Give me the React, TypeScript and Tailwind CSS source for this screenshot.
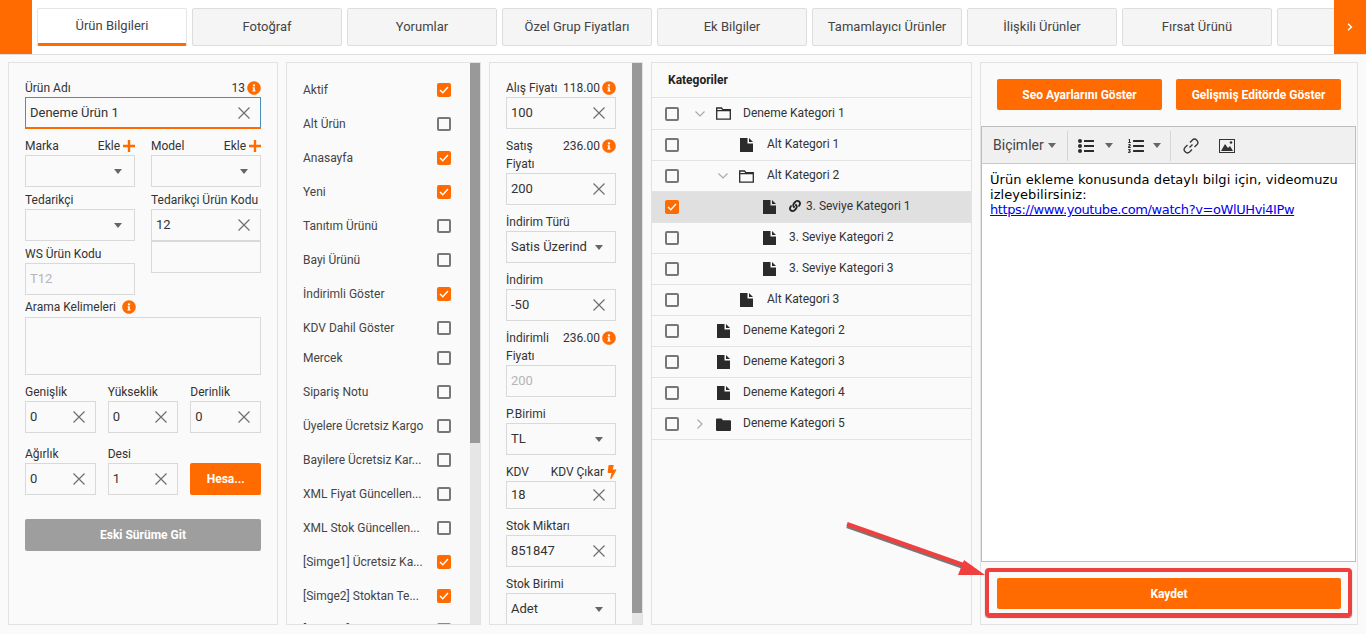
import type React from "react"
import { FaBolt, FaInfoCircle, FaLink, FaListOl } from "react-icons/fa"

const tabs = [
  "Ürün Bilgileri",
  "Fotoğraf",
  "Yorumlar",
  "Özel Grup Fiyatları",
  "Ek Bilgiler",
  "Tamamlayıcı Ürünler",
  "İlişkili Ürünler",
  "Fırsat Ürünü",
  "",
]

const flags = [
  { label: "Aktif", on: true },
  { label: "Alt Ürün", on: false },
  { label: "Anasayfa", on: true },
  { label: "Yeni", on: true },
  { label: "Tanıtım Ürünü", on: false },
  { label: "Bayi Ürünü", on: false },
  { label: "İndirimli Göster", on: true },
  { label: "KDV Dahil Göster", on: false },
  { label: "Mercek", on: false, tight: true },
  { label: "Sipariş Notu", on: false },
  { label: "Üyelere Ücretsiz Kargo", on: false },
  { label: "Bayilere Ücretsiz Kar...", on: false },
  { label: "XML Fiyat Güncellen...", on: false },
  { label: "XML Stok Güncellen...", on: false },
  { label: "[Simge1] Ücretsiz Ka...", on: true },
  { label: "[Simge2] Stoktan Te...", on: true },
  { label: "[Simge3]", on: true },
]

type Node = { label: string; level: number; kind: "open" | "closed" | "file"; checked?: boolean; link?: boolean }

const tree: Node[] = [
  { label: "Deneme Kategori 1", level: 0, kind: "open" },
  { label: "Alt Kategori 1", level: 1, kind: "file" },
  { label: "Alt Kategori 2", level: 1, kind: "open" },
  { label: "3. Seviye Kategori 1", level: 2, kind: "file", checked: true, link: true },
  { label: "3. Seviye Kategori 2", level: 2, kind: "file" },
  { label: "3. Seviye Kategori 3", level: 2, kind: "file" },
  { label: "Alt Kategori 3", level: 1, kind: "file" },
  { label: "Deneme Kategori 2", level: 0, kind: "file" },
  { label: "Deneme Kategori 3", level: 0, kind: "file" },
  { label: "Deneme Kategori 4", level: 0, kind: "file" },
  { label: "Deneme Kategori 5", level: 0, kind: "closed" },
]

const Clear = () => (
  <svg width="12" height="12" viewBox="0 0 12 12" className="shrink-0 text-[#6f6f6f]">
    <path d="M0.5 0.5 L11.5 11.5 M11.5 0.5 L0.5 11.5" stroke="currentColor" strokeWidth="1.2" fill="none" />
  </svg>
)

const Caret = () => <span className="h-0 w-0 shrink-0 border-x-[4px] border-t-[5px] border-x-transparent border-t-[#666]" />

const Info = () => <FaInfoCircle className="shrink-0 text-[14px] text-[#ff6b00]" />

const Plus = () => (
  <svg width="12" height="12" viewBox="0 0 12 12" className="ml-[1px] shrink-0 text-[#ff6b00]">
    <path d="M6 0 V12 M0 6 H12" stroke="currentColor" strokeWidth="2.4" fill="none" />
  </svg>
)

const Input: React.FC<{ value?: string; height?: string; focus?: boolean; disabled?: boolean; select?: boolean; clear?: boolean }> = ({
  value = "",
  height = "h-[32px]",
  focus,
  disabled,
  select,
  clear,
}) => (
  <div
    className={`flex ${height} w-full shrink-0 items-center justify-between overflow-hidden border pl-[4px] text-[13px] ${
      focus ? "border-[#4a90b8] border-b-2 border-b-[#ff6b00] pr-[10px]" : "border-[#d9d9d9] pr-[10px]"
    } ${disabled ? "text-[#b5b5b5]" : "text-[#333]"}`}
  >
    <span className="whitespace-nowrap">{value}</span>
    {clear && <Clear />}
    {select && (
      <span className="ml-[8px] mr-[2px] flex shrink-0">
        <Caret />
      </span>
    )}
  </div>
)

const Label: React.FC<{ text: string; children?: React.ReactNode }> = ({ text, children }) => (
  <div className="flex h-[20px] items-center justify-between whitespace-nowrap pt-[2px] text-[12px] text-[#333]">
    <span>{text}</span>
    {children && <span className="flex items-center gap-[2px]">{children}</span>}
  </div>
)

const TwoLine: React.FC<{ first: string; second: string; value: string }> = ({ first, second, value }) => (
  <div className="flex h-[38px] justify-between text-[12px] leading-[18px] text-[#333]">
    <div className="pt-[2px]">
      {first}
      <br />
      {second}
    </div>
    <span className="flex h-[20px] items-center gap-[2px] pt-[1px]">
      {value}
      <Info />
    </span>
  </div>
)

const Check: React.FC<{ on?: boolean }> = ({ on }) =>
  on ? (
    <span className="flex h-[14px] w-[14px] shrink-0 items-center justify-center rounded-[2px] bg-[#ff6b00]">
      <svg width="10" height="8" viewBox="0 0 10 8">
        <path d="M1 4 L3.8 6.8 L9 1" stroke="#fff" strokeWidth="1.4" fill="none" />
      </svg>
    </span>
  ) : (
    <span className="h-[14px] w-[14px] shrink-0 rounded-[2px] border-2 border-[#777]" />
  )

const Scrollbar: React.FC<{ thumb: string }> = ({ thumb }) => (
  <div className="h-full w-[10px] shrink-0 bg-[#e6e6e6]">
    <div className={`${thumb} w-full bg-[#999]`} />
  </div>
)

const FolderOpen = () => (
  <svg width="15" height="13" viewBox="0 0 15 13" className="text-[#2b2b2b]">
    <path d="M0.7 1 H5.5 L6.8 2.7 H14.3 V12.2 H0.7 Z M0.7 3.6 H14.3" stroke="currentColor" strokeWidth="1.3" fill="none" />
  </svg>
)

const FolderClosed = () => (
  <svg width="15" height="13" viewBox="0 0 15 13" className="text-[#2b2b2b]">
    <path d="M0 1.5 Q0 0.5 1 0.5 H5.5 L7 2.2 H14 Q15 2.2 15 3.2 V12 Q15 13 14 13 H1 Q0 13 0 12 Z" fill="currentColor" />
  </svg>
)

const FileIcon = () => (
  <svg width="13" height="14" viewBox="0 0 13 14" className="text-[#2b2b2b]">
    <path d="M0 0 H7.5 V5.5 H13 V14 H0 Z M9 0 L13 4 H9 Z" fill="currentColor" />
  </svg>
)

const ListDots = () => (
  <svg width="16" height="14" viewBox="0 0 16 14" className="shrink-0 text-[#2b2b2b]">
    <circle cx="2" cy="2" r="2" fill="currentColor" />
    <circle cx="2" cy="7" r="2" fill="currentColor" />
    <circle cx="2" cy="12" r="2" fill="currentColor" />
    <path d="M6 2 H16 M6 7 H16 M6 12 H16" stroke="currentColor" strokeWidth="2" fill="none" />
  </svg>
)

const TreeRow: React.FC<{ node: Node; first: boolean }> = ({ node, first }) => (
  <div
    className={`flex ${first ? "h-[32px]" : "h-[31px]"} items-center border-b border-[#e3e3e3] pl-[13px] text-[12px] text-[#333] ${
      node.checked ? "bg-[#e0e0e0]" : ""
    }`}
  >
    <Check on={node.checked} />
    <div className="flex items-center pl-[16px]" style={{ marginLeft: node.level * 23 }}>
      <span className="flex w-[21px] shrink-0 items-center">
        {node.kind === "open" && (
          <svg width="10" height="6" viewBox="0 0 10 6" className="text-[#aaa]">
            <path d="M0.5 0.5 L5 5 L9.5 0.5" stroke="currentColor" strokeWidth="1.2" fill="none" />
          </svg>
        )}
        {node.kind === "closed" && (
          <svg width="6" height="10" viewBox="0 0 6 10" className="ml-[2px] text-[#aaa]">
            <path d="M0.5 0.5 L5 5 L0.5 9.5" stroke="currentColor" strokeWidth="1.2" fill="none" />
          </svg>
        )}
      </span>
      <span className="flex w-[15px] shrink-0 justify-center">
        {node.kind === "open" && <FolderOpen />}
        {node.kind === "closed" && <FolderClosed />}
        {node.kind === "file" && <FileIcon />}
      </span>
      <span
        className={`${node.level === 1 ? "ml-[13px]" : "ml-[12px]"} flex items-center gap-[5px] whitespace-nowrap ${first ? "pb-[1px]" : "pb-[3px]"}`}
      >
        {node.link && <FaLink className="text-[12px] text-[#222]" />}
        {node.label}
      </span>
    </div>
  </div>
)

const Orange: React.FC<{ text: string; className: string }> = ({ text, className }) => (
  <button className={`flex items-center justify-center overflow-hidden whitespace-nowrap rounded-[2px] bg-[#ff6b00] text-[12px] font-bold text-white ${className}`}>
    {text}
  </button>
)

export default function App() {
  return (
    <div className="relative h-[634px] w-[1366px] overflow-hidden bg-[#fafafa] font-['Roboto',sans-serif]">
      <div className="flex h-[55px] border-b border-[#ddd] bg-white">
        <div className="w-[32px] shrink-0 bg-[#ff6b00]" />
        <div className="flex flex-1 gap-[5px] overflow-hidden pl-[5px] pt-[8px]">
          {tabs.map((tab, i) => (
            <div
              key={i}
              className={`flex h-[38px] w-[150px] shrink-0 items-center justify-center rounded-[2px] border text-[13px] text-[#444] ${
                i === 0 ? "border-[#e5e5e5] border-b-[3px] border-b-[#ff6b00] bg-white" : "border-[#ddd] bg-[#f5f5f5]"
              }`}
            >
              {tab}
            </div>
          ))}
        </div>
        <div className="flex w-[32px] shrink-0 items-center justify-center bg-[#ff6b00]">
          <svg width="6" height="8" viewBox="0 0 6 8">
            <path d="M1 0.8 L4.4 4 L1 7.2" stroke="#fff" strokeWidth="1.5" fill="none" />
          </svg>
        </div>
      </div>

      <div className="flex h-[570px] gap-[8px] px-[8px] pt-[7px]">
        {/* product */}
        <div className="h-[563px] w-[270px] shrink-0 border border-[#e2e2e2] px-[16px] pt-[14px]">
          <Label text="Ürün Adı">
            13
            <Info />
          </Label>
          <Input value="Deneme Ürün 1" focus clear />
          <div className="mt-[6px] flex gap-[16px]">
            <div className="flex w-[110px] flex-col">
              <Label text="Marka">
                Ekle
                <Plus />
              </Label>
              <Input select />
              <div className="mt-[2px]">
                <Label text="Tedarikçi" />
              </div>
              <Input select />
              <div className="mt-[2px]">
                <Label text="WS Ürün Kodu" />
              </div>
              <Input value="T12" disabled />
            </div>
            <div className="flex w-[110px] flex-col">
              <Label text="Model">
                Ekle
                <Plus />
              </Label>
              <Input select />
              <div className="mt-[2px]">
                <Label text="Tedarikçi Ürün Kodu" />
              </div>
              <Input value="12" clear />
              <Input />
            </div>
          </div>
          <div className="mt-[2px] flex h-[20px] items-center gap-[6px] text-[12px] text-[#333]">
            Arama Kelimeleri
            <Info />
          </div>
          <div className="h-[58px] border border-[#d9d9d9]" />
          <div className="mt-[6px] flex gap-[12px]">
            {["Genişlik", "Yükseklik", "Derinlik"].map((name) => (
              <div key={name} className="flex-1">
                <Label text={name} />
                <Input value="0" clear />
              </div>
            ))}
          </div>
          <div className="mt-[10px] flex items-end gap-[12px]">
            <div className="flex-1">
              <Label text="Ağırlık" />
              <Input value="0" clear />
            </div>
            <div className="flex-1">
              <Label text="Desi" />
              <Input value="1" clear />
            </div>
            <div className="flex-1">
              <Orange text="Hesa..." className="h-[32px] w-full" />
            </div>
          </div>
          <Orange text="Eski Sürüme Git" className="mt-[24px] h-[32px] w-full !bg-[#9e9e9e]" />
        </div>

        {/* flags */}
        <div className="flex h-[563px] w-[195px] shrink-0 overflow-hidden border border-[#e2e2e2]">
          <div className="min-w-0 flex-1 pl-[16px] pr-[19px] pt-[10px]">
            {flags.map((flag) => (
              <div key={flag.label} className={`flex h-[34px] items-center justify-between text-[12px] text-[#444] ${flag.tight ? "-mt-[4px]" : ""}`}>
                <span className="whitespace-nowrap">{flag.label}</span>
                <Check on={flag.on} />
              </div>
            ))}
          </div>
          <Scrollbar thumb="h-[380px]" />
        </div>

        {/* prices */}
        <div className="flex h-[563px] w-[154px] shrink-0 overflow-hidden border border-[#e2e2e2]">
          <div className="min-w-0 flex-1 pl-[16px] pr-[16px] pt-[14px]">
            <Label text="Alış Fiyatı">
              118.00
              <Info />
            </Label>
            <Input value="100" clear />
            <div className="mt-[6px]">
              <TwoLine first="Satış" second="Fiyatı" value="236.00" />
            </div>
            <Input value="200" clear />
            <div className="mt-[6px]">
              <Label text="İndirim Türü" />
            </div>
            <Input value="Satis Üzerind" select />
            <div className="mt-[6px]">
              <Label text="İndirim" />
            </div>
            <Input value="-50" clear />
            <div className="mt-[6px]">
              <TwoLine first="İndirimli" second="Fiyatı" value="236.00" />
            </div>
            <Input value="200" disabled />
            <div className="mt-[6px]">
              <Label text="P.Birimi" />
            </div>
            <Input value="TL" select />
            <div className="mt-[6px]">
              <Label text="KDV">
                KDV Çıkar
                <FaBolt className="-ml-[1px] -mr-[3px] text-[14px] text-[#ff6b00]" />
              </Label>
            </div>
            <Input value="18" clear height="h-[28px]" />
            <div className="mt-[6px]">
              <Label text="Stok Miktarı" />
            </div>
            <Input value="851847" clear />
            <div className="mt-[6px]">
              <Label text="Stok Birimi" />
            </div>
            <Input value="Adet" select />
          </div>
          <Scrollbar thumb="h-[550px]" />
        </div>

        {/* categories */}
        <div className="h-[563px] w-[321px] shrink-0 border border-[#e2e2e2]">
          <div className="flex h-[35px] items-center border-b border-[#e3e3e3] pl-[16px] text-[12px] font-bold text-[#222]">Kategoriler</div>
          {tree.map((node, i) => (
            <TreeRow key={node.label} node={node} first={i === 0} />
          ))}
        </div>

        {/* description */}
        <div className="flex h-[563px] w-[378px] shrink-0 flex-col border border-[#e2e2e2]">
          <div className="flex gap-[14px] px-[16px] pt-[16px]">
            <Orange text="Seo Ayarlarını Göster" className="h-[31px] flex-1" />
            <Orange text="Gelişmiş Editörde Göster" className="h-[31px] flex-1" />
          </div>
          <div className="mr-[1px] mt-[16px] flex h-[436px] flex-col border border-[#bdbdbd] bg-white">
            <div className="flex h-[37px] shrink-0 items-center border-b border-[#c9c9c9] bg-[#f0f0f0] pt-[1px] text-[#333]">
              <div className="flex h-[30px] w-[86px] items-center gap-[4px] border-r border-[#d5d5d5] pl-[11px] text-[14px] text-[#444]">
                Biçimler
                <Caret />
              </div>
              <div className="flex h-[30px] w-[103px] items-center border-r border-[#d5d5d5] pl-[10px]">
                <ListDots />
                <span className="ml-[11px] flex">
                  <Caret />
                </span>
                <FaListOl className="ml-[15px] text-[16px] text-[#2b2b2b]" />
                <span className="ml-[9px] flex">
                  <Caret />
                </span>
              </div>
              <svg width="16" height="16" viewBox="0 0 16 16" className="ml-[12px]">
                <path
                  d="M6.5 9.5 L9.5 6.5 M7 4.5 L9.2 2.2 A2.6 2.6 0 0 1 13.8 6.8 L11.5 9 M9 11.5 L6.8 13.8 A2.6 2.6 0 0 1 2.2 9.2 L4.5 7"
                  stroke="#333"
                  strokeWidth="1.3"
                  fill="none"
                />
              </svg>
              <svg width="16" height="14" viewBox="0 0 16 14" className="ml-[20px]">
                <rect x="0.5" y="0.5" width="15" height="13" stroke="#333" fill="none" />
                <path d="M2 12 L6 5 L9 9 L11 7 L14 12 Z" fill="#333" />
                <circle cx="12" cy="3.5" r="1.3" fill="#333" />
              </svg>
            </div>
            <div className="px-[8px] pt-[8px] font-['DejaVu_Sans',sans-serif] text-[13px] leading-[15px] tracking-[0.06px] text-black">
              Ürün ekleme konusunda detaylı bilgi için, videomuzu izleyebilirsiniz:
              <br />
              <a className="tracking-[-0.4px] text-[#0000ee] underline">https://www.youtube.com/watch?v=oWlUHvi4IPw</a>
            </div>
          </div>
          <div className="px-[16px] pt-[16px]">
            <Orange text="Kaydet" className="h-[31px] w-full" />
          </div>
        </div>
      </div>

      {/* annotation */}
      <div className="absolute left-[985px] top-[568px] h-[49px] w-[367px] rounded-[4px] border-4 border-[#ef3f3f] shadow-[0_1px_1px_#666]" />
      <svg width="1366" height="634" viewBox="0 0 1366 634" className="pointer-events-none absolute left-0 top-0">
        <path d="M847 525 L972 569" stroke="#777" strokeWidth="4" transform="translate(0 1)" />
        <path d="M847 524 L972 568" stroke="#ef3f3f" strokeWidth="4" />
        <path d="M985 575 L964 560 L958 575 Z" fill="#ef3f3f" />
      </svg>
    </div>
  )
}
